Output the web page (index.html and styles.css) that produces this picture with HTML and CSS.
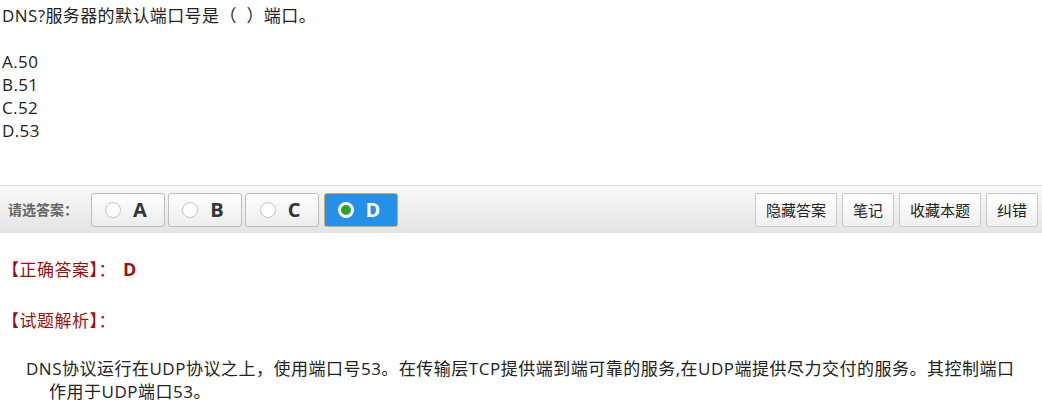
FILE: index.html
```html
<!DOCTYPE html>
<html lang="zh-CN">
<head>
    <meta charset="UTF-8">
    <title>试题</title>
    <link rel="stylesheet" href="styles.css">
</head>
<body>
    <!-- 题干 -->
    <div class="question">
        <p class="stem">DNS?服务器的默认端口号是（&nbsp; ）端口。</p>
        <ul class="options">
            <li>A.50</li>
            <li>B.51</li>
            <li>C.52</li>
            <li>D.53</li>
        </ul>
    </div>

    <!-- 答题栏 -->
    <div class="toolbar">
        <span class="label">请选答案：</span>
        <div class="choices">
            <button class="choice"><span class="dot"></span>A</button>
            <button class="choice"><span class="dot"></span>B</button>
            <button class="choice"><span class="dot"></span>C</button>
            <button class="choice active"><span class="dot"></span>D</button>
        </div>
        <div class="actions">
            <button class="action">隐藏答案</button>
            <button class="action">笔记</button>
            <button class="action">收藏本题</button>
            <button class="action">纠错</button>
        </div>
    </div>

    <!-- 答案与解析 -->
    <div class="answer">
        <p class="title">【正确答案】： <b class="key">D</b></p>
        <p class="title analysis-title">【试题解析】：</p>
        <p class="analysis">DNS协议运行在UDP协议之上，使用端口号53。在传输层TCP提供端到端可靠的服务,在UDP端提供尽力交付的服务。其控制端口作用于UDP端口53。</p>
    </div>
</body>
</html>
```

FILE: styles.css
```css
body {
    margin: 0;
    font-family: "Open Sans", "Noto Sans CJK SC", sans-serif;
    font-size: 17px;
    line-height: 23px;
    color: #222;
    background: #fff;
}

/* 题干 */
.question {
    padding: 4px 2px 0;
    letter-spacing: 0.4px;
}

.stem {
    margin: 0 0 23px;
}

.options {
    list-style: none;
    margin: 0;
    padding: 0;
}

/* 答题栏 */
.toolbar {
    margin-top: 43px;
    display: flex;
    align-items: center;
    height: 48px;
    padding: 0 4px 0 8px;
    border-top: 1px solid #dcdcdc;
    background: linear-gradient(#f9f9f9, #e4e4e4);
    box-sizing: border-box;
}

.toolbar .label {
    font-size: 14px;
    font-weight: bold;
    color: #666;
    width: 83px;
}

.choices {
    display: flex;
    gap: 3px;
}

.choice {
    display: flex;
    align-items: center;
    justify-content: center;
    gap: 12px;
    width: 74px;
    height: 34px;
    padding: 0 4px 0 0;
    border: 1px solid #bdbdbd;
    border-radius: 3px;
    background: linear-gradient(#ffffff, #ececec);
    font-family: "Open Sans", sans-serif;
    font-size: 20px;
    font-weight: bold;
    color: #333;
    cursor: pointer;
}

.choice .dot {
    width: 14px;
    height: 14px;
    border: 1px solid #c4c4c4;
    border-radius: 50%;
    background: #fff;
}

.choice.active {
    margin-left: 2px;
    border-color: #c9a86a;
    background: #2490e8;
    color: #fff;
}

.choice.active .dot {
    width: 10px;
    height: 10px;
    border: 3px solid #fff;
    background: #2aa52a;
}

.actions {
    margin-left: auto;
    display: flex;
    gap: 5px;
}

.action {
    height: 34px;
    padding: 0 10px;
    border: 1px solid #c8c8c8;
    border-radius: 2px;
    background: linear-gradient(#ffffff, #f0f0f0);
    font-family: "Noto Sans CJK SC", sans-serif;
    font-size: 15px;
    color: #222;
    cursor: pointer;
}

/* 答案与解析 */
.answer {
    padding: 25px 0 0 2px;
}

.answer p {
    margin: 0;
}

.title {
    font-size: 17px;
    color: #a00f0f;
    letter-spacing: 0.5px;
}

.key {
    font-family: "Open Sans", sans-serif;
    font-size: 18px;
    margin-left: 2px;
}

.analysis-title {
    margin-top: 28px !important;
}

.analysis {
    margin-top: 25px !important;
    padding: 0 16px 0 47px;
    text-indent: -23px;
    letter-spacing: 0.5px;
}
```
